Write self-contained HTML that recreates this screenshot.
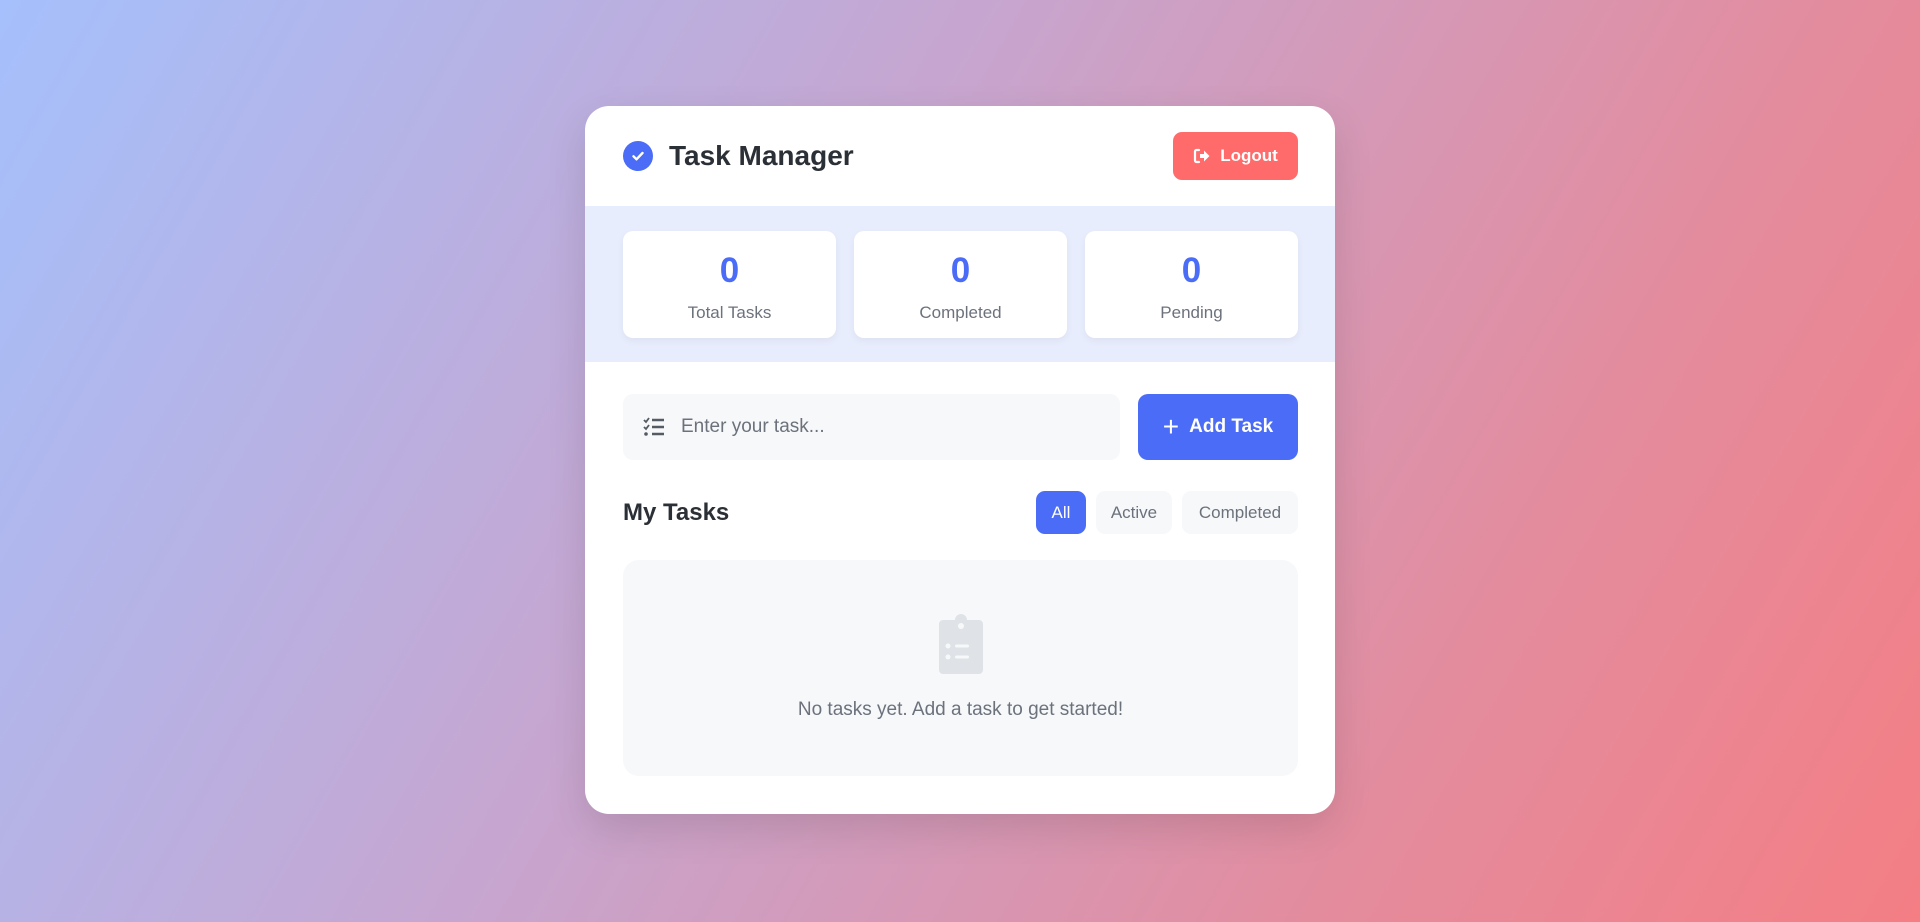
<!DOCTYPE html>
<html><head><meta charset="utf-8"><style>
*{box-sizing:border-box;margin:0;padding:0}
body{width:1920px;height:922px;overflow:hidden;font-family:"Liberation Sans",sans-serif;background:linear-gradient(120deg,#a5c0fc 0%,#c6a6d0 40%,#e38c9e 75%,#f47e84 100%);position:relative}
.card{position:absolute;left:585px;top:106px;width:750px;height:708px;background:#fff;border-radius:24px;box-shadow:0 15px 40px rgba(0,0,0,.12);overflow:hidden}
.hdr{height:100px;display:flex;align-items:center;justify-content:space-between;padding:0 37px 0 38px}
.ttl{display:flex;align-items:center;font-size:28px;color:#2b2f36;font-weight:bold}
.ttl .ic{width:30px;height:30px;border-radius:50%;background:#4a6cf7;margin-right:16px;display:flex;align-items:center;justify-content:center}
.logout{width:125px;height:48px;background:#ff6b6b;color:#fff;border-radius:9px;display:flex;align-items:center;justify-content:center;font-weight:bold;font-size:17px}
.stats{height:156px;background:#e8edfd;display:flex;gap:18px;padding:25px 37px 0 38px}
.st{flex:1;height:107px;background:#fff;border-radius:10px;box-shadow:0 3px 8px rgba(0,0,0,.05);text-align:center}
.st b{display:block;color:#4a6cf7;font-size:35px;margin-top:20px;height:40px}
.st span{display:block;color:#6c727c;font-size:17px;margin-top:12px}
.row{position:absolute;top:288px;left:38px;display:flex;gap:18px}
.inp{width:497px;height:66px;background:#f7f8fa;border-radius:10px;display:flex;align-items:center;padding-left:20px;color:#6c727c;font-size:19px}
.add{width:160px;height:66px;background:#4a6cf7;border-radius:10px;color:#fff;font-weight:bold;font-size:19px;display:flex;align-items:center;justify-content:center}
.mt{position:absolute;top:385px;left:38px;right:37px;display:flex;justify-content:space-between;align-items:center}
.mt h2{font-size:24px;color:#2b2f36;font-weight:bold}
.f{display:flex;gap:10px}
.f div{height:43px;border-radius:9px;background:#f7f8fa;color:#6c727c;font-size:17px;display:flex;align-items:center;justify-content:center}
.empty{position:absolute;top:454px;left:38px;width:675px;height:216px;background:#f7f8fa;border-radius:16px;text-align:center}
</style></head><body>
<div class="card">
<div class="hdr"><div class="ttl"><div class="ic"><svg width="16" height="16" viewBox="0 0 16 16"><path d="M3.5 8.3l3 3 6-6.3" stroke="#fff" stroke-width="2.4" fill="none" stroke-linecap="round" stroke-linejoin="round"/></svg></div>Task Manager</div>
<div class="logout"><svg width="18" height="16" viewBox="0 0 18 16" style="margin-right:9px"><path d="M6 2H3.5A1.5 1.5 0 0 0 2 3.5v9A1.5 1.5 0 0 0 3.5 14H6" stroke="#fff" stroke-width="2.2" fill="none" stroke-linecap="round"/><path d="M7 6h4V2.5L16.5 8 11 13.5V10H7z" fill="#fff"/></svg>Logout</div></div>
<div class="stats"><div class="st"><b>0</b><span>Total Tasks</span></div><div class="st"><b>0</b><span>Completed</span></div><div class="st"><b>0</b><span>Pending</span></div></div>
<div class="row"><div class="inp"><svg width="22" height="20" viewBox="0 0 22 20" style="margin-right:16px"><path d="M1 3l2 2 3-4M1 10l2 2 3-4" stroke="#555b63" stroke-width="1.8" fill="none"/><circle cx="3" cy="17" r="1.8" fill="#555b63"/><path d="M9 3h12M9 10h12M9 17h12" stroke="#555b63" stroke-width="2.4"/></svg>Enter your task...</div>
<div class="add"><span style="font-size:28px;font-weight:normal;margin-right:10px;line-height:1">+</span>Add Task</div></div>
<div class="mt"><h2>My Tasks</h2><div class="f"><div style="width:50px;background:#4a6cf7;color:#fff">All</div><div style="width:76px">Active</div><div style="width:116px">Completed</div></div></div>
<div class="empty"><svg width="48" height="62" viewBox="0 0 48 62" style="margin-top:54px"><path d="M18 6a6 6 0 0 1 12 0h12a4 4 0 0 1 4 4v46a4 4 0 0 1-4 4H6a4 4 0 0 1-4-4V10a4 4 0 0 1 4-4z" fill="#dfe3e7"/><circle cx="24" cy="12" r="3" fill="#f7f8fa"/><circle cx="11" cy="32" r="2.5" fill="#f7f8fa"/><circle cx="11" cy="43" r="2.5" fill="#f7f8fa"/><rect x="18" y="30.5" width="14" height="3" rx="1.5" fill="#f7f8fa"/><rect x="18" y="41.5" width="14" height="3" rx="1.5" fill="#f7f8fa"/></svg>
<div style="color:#6c727c;font-size:19px;margin-top:18px">No tasks yet. Add a task to get started!</div></div>
</div>
</body></html>
